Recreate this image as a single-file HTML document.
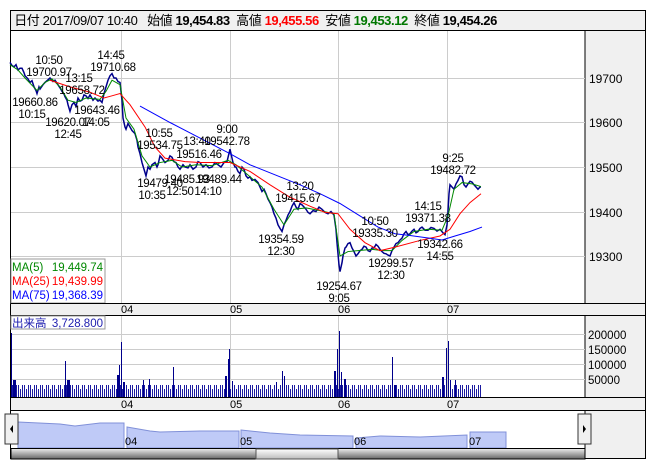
<!DOCTYPE html>
<html><head><meta charset="utf-8"><style>
body{margin:0;width:652px;height:469px;background:#fff;font-family:"Liberation Sans","Noto Sans CJK JP",sans-serif;position:relative;overflow:hidden}
.a{position:absolute}
</style></head><body>
<div class="a" style="left:10px;top:10px;width:636px;height:449px;border:1px solid #000;box-sizing:border-box;background:#f0f0f0"></div>
<div class="a" style="left:11px;top:11px;width:634px;height:19px;background:#f0f0f0;border-bottom:1px solid #000;font-size:13px;line-height:19px;white-space:nowrap;letter-spacing:-0.4px">
&nbsp;日付 2017/09/07 10:40 &nbsp;&nbsp;始値 <b>19,454.83</b> &nbsp;高値 <b style="color:#f00">19,455.56</b> &nbsp;安値 <b style="color:#070">19,453.12</b> &nbsp;終値 <b>19,454.26</b></div>

<svg class="a" style="left:0;top:0" width="652" height="469" viewBox="0 0 652 469" font-family="Liberation Sans, sans-serif">
<rect x="11" y="31" width="574" height="272" fill="#fff"/>
<line x1="585" y1="31" x2="585" y2="303" stroke="#000"/>
<g stroke="#ccc" stroke-width="1">
<line x1="121.5" y1="31" x2="121.5" y2="303"/><line x1="230.5" y1="31" x2="230.5" y2="303"/><line x1="338.5" y1="31" x2="338.5" y2="303"/><line x1="447.5" y1="31" x2="447.5" y2="303"/>
<line x1="11" y1="78.5" x2="585" y2="78.5"/><line x1="11" y1="122.5" x2="585" y2="122.5"/><line x1="11" y1="167.5" x2="585" y2="167.5"/><line x1="11" y1="212.5" x2="585" y2="212.5"/><line x1="11" y1="256.5" x2="585" y2="256.5"/>
</g>
<g font-size="12" fill="#000"><text x="589" y="83">19700</text><text x="589" y="127">19600</text><text x="589" y="172">19500</text><text x="589" y="217">19400</text><text x="589" y="261">19300</text></g>
<g transform="matrix(1 0 0 -0.445 0 8844.5)" fill="none">
<polyline vector-effect="non-scaling-stroke" stroke="#00008b" stroke-width="1.5" points="10,19735 12,19728 14,19725 16,19730 18,19718 20,19722 22,19722 24,19712 25,19705 28,19698 30,19690 32,19694 34,19680 36,19672 37,19665 39,19680 40,19675 43,19685 45,19690 48,19696 50,19700 53,19692 55,19695 57,19688 60,19678 62,19670 64,19664 65,19658 67,19650 68,19640 70,19625 72,19640 74,19645 76,19636 78,19655 80,19648 82,19650 84,19662 86,19660 88,19654 90,19662 93,19650 95,19655 98,19648 100,19650 102,19645 104,19665 106,19680 108,19695 110,19705 112,19710 114,19700 116,19700 118,19692 120,19690 122,19650 123,19610 125,19590 126,19585 128,19598 130,19590 132,19582 135,19575 137,19560 138,19545 140,19530 142,19510 144,19495 146,19480 148,19500 150,19495 152,19505 155,19510 157,19500 158,19505 160,19525 162,19520 165,19510 168,19515 170,19525 172,19522 174,19512 176,19510 178,19500 180,19495 183,19505 185,19500 188,19498 190,19505 193,19495 196,19500 198,19512 200,19510 203,19500 206,19505 209,19498 212,19500 215,19510 218,19505 221,19500 224,19510 227,19512 230,19540 232,19520 233,19510 235,19500 236,19500 238,19490 240,19485 242,19500 244,19495 246,19480 248,19475 250,19478 252,19470 255,19472 258,19465 260,19455 262,19445 264,19450 266,19440 268,19428 270,19420 272,19410 274,19395 276,19385 278,19370 280,19362 282,19355 284,19370 286,19380 288,19392 290,19400 292,19412 294,19420 296,19410 298,19405 300,19418 302,19415 304,19410 306,19405 308,19398 310,19395 313,19402 316,19400 319,19410 322,19405 325,19398 328,19395 331,19400 334,19392 336,19360 337,19330 339,19280 340,19265 342,19285 343,19300 345,19318 346,19320 348,19328 350,19330 352,19318 354,19310 356,19300 358,19305 360,19312 362,19315 364,19322 366,19320 368,19312 370,19310 372,19318 374,19318 376,19326 378,19322 380,19315 382,19310 384,19306 386,19305 388,19302 390,19300 392,19312 394,19320 396,19328 398,19330 400,19336 402,19340 404,19350 406,19355 408,19348 410,19350 412,19356 414,19360 416,19352 418,19355 420,19362 422,19365 425,19358 428,19358 431,19364 434,19362 437,19356 440,19360 443,19352 445,19348 447,19370 448,19400 449,19440 450,19460 452,19455 454,19450 456,19462 458,19470 460,19480 462,19478 464,19460 466,19455 468,19462 470,19468 472,19466 474,19460 476,19455 478,19450 480,19455 481,19455"/>
<polyline vector-effect="non-scaling-stroke" stroke="#080" stroke-width="1" points="10,19730 18,19718 25,19700 37,19672 45,19690 52,19698 60,19680 68,19650 76,19645 86,19655 100,19652 106,19670 112,19695 120,19685 126,19610 134,19585 142,19525 150,19500 160,19510 172,19515 182,19500 196,19505 212,19503 228,19515 236,19505 248,19482 262,19455 274,19405 284,19370 294,19405 306,19408 320,19402 334,19395 340,19300 348,19310 358,19312 372,19315 384,19312 392,19312 402,19335 414,19355 428,19360 442,19358 448,19390 454,19450 462,19465 472,19462 481,19456"/>
<polyline vector-effect="non-scaling-stroke" stroke="#f00" stroke-width="1" points="50,19695 70,19680 90,19668 104,19655 112,19660 120,19665 130,19640 145,19590 155,19545 165,19520 185,19512 200,19510 230,19510 250,19490 270,19460 290,19432 310,19412 325,19398 338,19395 350,19360 365,19330 380,19312 395,19320 420,19335 440,19345 450,19360 460,19395 470,19420 481,19440"/>
<polyline vector-effect="non-scaling-stroke" stroke="#00f" stroke-width="1" points="140,19637 170,19600 200,19565 230,19530 250,19505 280,19478 300,19460 320,19440 340,19418 360,19390 378,19365 395,19350 410,19346 430,19340 442,19336 455,19345 470,19355 482,19365"/>
</g>
<g font-size="11.5" fill="#000" text-anchor="middle" letter-spacing="-0.3">
<text x="49" y="64">10:50</text><text x="49" y="76">19700.97</text>
<text x="111" y="59">14:45</text><text x="113" y="71">19710.68</text>
<text x="79" y="82">13:15</text><text x="82" y="94">19658.72</text>
<text x="35" y="106">19660.86</text><text x="32" y="118">10:15</text>
<text x="97" y="114">19643.46</text><text x="68" y="126">19620.07</text><text x="96" y="126">14:05</text><text x="68" y="138">12:45</text>
<text x="159" y="137">10:55</text><text x="160" y="149">19534.75</text>
<text x="227" y="133">9:00</text><text x="227" y="145">19542.78</text><text x="197" y="145">13:40</text>
<text x="199" y="158">19516.46</text>
<text x="160" y="187">19479.40</text><text x="152" y="199">10:35</text>
<text x="187" y="183">19485.93</text><text x="180" y="195">12:50</text>
<text x="219" y="183">19489.44</text><text x="208" y="195">14:10</text>
<text x="300" y="190">13:20</text><text x="298" y="202">19415.67</text>
<text x="281" y="243">19354.59</text><text x="281" y="255">12:30</text>
<text x="375" y="225">10:50</text><text x="375" y="237">19335.30</text>
<text x="428" y="210">14:15</text><text x="428" y="222">19371.38</text>
<text x="453" y="162">9:25</text><text x="453" y="174">19482.72</text>
<text x="440" y="248">19342.66</text><text x="440" y="260">14:55</text>
<text x="391" y="267">19299.57</text><text x="391" y="279">12:30</text>
<text x="339" y="290">19254.67</text><text x="339" y="302">9:05</text>
</g>
<rect x="11" y="259" width="94" height="44" fill="#fff" stroke="#999"/>
<g font-size="11.5"><text x="12" y="271" fill="#080">MA(5)</text><text x="103" y="271" fill="#080" text-anchor="end">19,449.74</text>
<text x="12" y="285" fill="#f00">MA(25)</text><text x="103" y="285" fill="#f00" text-anchor="end">19,439.99</text>
<text x="12" y="299" fill="#00f">MA(75)</text><text x="103" y="299" fill="#00f" text-anchor="end">19,368.39</text></g>
<rect x="11" y="303" width="634" height="12" fill="#f0f0f0"/>
<line x1="11" y1="303.5" x2="645" y2="303.5" stroke="#000"/><line x1="11" y1="315.5" x2="645" y2="315.5" stroke="#000"/>
<g font-size="11"><text x="121" y="313">04</text><text x="230" y="313">05</text><text x="338" y="313">06</text><text x="447" y="313">07</text></g>
<rect x="11" y="316" width="574" height="81" fill="#fff"/>
<line x1="585" y1="316" x2="585" y2="397" stroke="#000"/>
<g stroke="#ccc"><line x1="121.5" y1="316" x2="121.5" y2="397"/><line x1="230.5" y1="316" x2="230.5" y2="397"/><line x1="338.5" y1="316" x2="338.5" y2="397"/><line x1="447.5" y1="316" x2="447.5" y2="397"/>
<line x1="11" y1="334.5" x2="585" y2="334.5"/><line x1="11" y1="349.5" x2="585" y2="349.5"/><line x1="11" y1="364.5" x2="585" y2="364.5"/><line x1="11" y1="379.5" x2="585" y2="379.5"/></g>
<g font-size="11.5"><text x="588" y="339">200000</text><text x="588" y="354">150000</text><text x="588" y="369">100000</text><text x="588" y="384">50000</text></g>
<defs><pattern id="vb" width="2" height="10" patternUnits="userSpaceOnUse"><rect width="1" height="10" fill="#1a1aa0"/></pattern>
<pattern id="vb2" width="6" height="10" patternUnits="userSpaceOnUse"><rect width="1" height="10" fill="#1a1aa0"/><rect x="4" y="3" width="1" height="7" fill="#1a1aa0"/></pattern></defs>
<rect x="11" y="389" width="471" height="8" fill="url(#vb)"/>
<rect x="11" y="385" width="471" height="4" fill="url(#vb2)"/>
<g fill="#00008b">
<rect x="11" y="333" width="1" height="64"/><rect x="13" y="380" width="3" height="17"/><rect x="65" y="361" width="1" height="36"/><rect x="67" y="380" width="3" height="17"/>
<rect x="117" y="375" width="2" height="22"/><rect x="119" y="365" width="1" height="32"/><rect x="121" y="342" width="1" height="55"/><rect x="123" y="382" width="2" height="15"/>
<rect x="173" y="367" width="1" height="30"/><rect x="143" y="380" width="1" height="17"/><rect x="149" y="379" width="1" height="18"/>
<rect x="225" y="376" width="2" height="21"/><rect x="228" y="359" width="1" height="38"/><rect x="229" y="349" width="1" height="48"/><rect x="232" y="381" width="1" height="16"/>
<rect x="282" y="371" width="1" height="26"/><rect x="284" y="376" width="1" height="21"/><rect x="276" y="382" width="1" height="15"/>
<rect x="334" y="371" width="2" height="26"/><rect x="337" y="349" width="1" height="48"/><rect x="339" y="331" width="1" height="66"/><rect x="341" y="372" width="1" height="25"/><rect x="344" y="379" width="2" height="18"/>
<rect x="392" y="357" width="1" height="40"/><rect x="394" y="385" width="2" height="12"/>
<rect x="442" y="377" width="2" height="20"/><rect x="446" y="348" width="1" height="49"/><rect x="448" y="341" width="1" height="56"/><rect x="450" y="380" width="1" height="17"/><rect x="455" y="380" width="1" height="17"/>
</g>
<rect x="11" y="316" width="94" height="13" fill="#fff" stroke="#999"/>
<g font-size="11.5" fill="#2020b0"><text x="12" y="327">出来高</text><text x="103" y="327" text-anchor="end">3,728.800</text></g>
<rect x="11" y="397" width="634" height="13" fill="#f0f0f0"/>
<line x1="11" y1="397.5" x2="645" y2="397.5" stroke="#000"/><line x1="11" y1="410.5" x2="645" y2="410.5" stroke="#000"/>
<g font-size="11"><text x="121" y="408">04</text><text x="230" y="408">05</text><text x="338" y="408">06</text><text x="447" y="408">07</text></g>
<rect x="11" y="411" width="574" height="37" fill="#fff"/>
<line x1="585" y1="411" x2="585" y2="459" stroke="#000"/>
<path d="M18,422 L60,424 L75,426 L100,423 L124,423 L124,448 L18,448Z M127,427 L150,431 L160,432 L200,431 L239,431 L239,448 L127,448Z M241,430 L270,433 L300,435 L353,436 L353,448 L241,448Z M356,438 L380,436 L420,437 L467,435 L467,448 L356,448Z M470,432 L482,432 L506,432 L506,448 L470,448Z" fill="#bfcaf7" stroke="#8090d8" stroke-width="1"/>
<g font-size="11"><text x="125" y="445">04</text><text x="240" y="445">05</text><text x="354" y="445">06</text><text x="469" y="445">07</text></g>
<rect x="5" y="414" width="13" height="30" fill="#f0f0f0" stroke="#333"/><path d="M10,429 L13,425 L13,433Z" fill="#000"/>
<rect x="578" y="414" width="13" height="30" fill="#f0f0f0" stroke="#333"/><path d="M586,429 L583,425 L583,433Z" fill="#000"/>
<defs><linearGradient id="sg" x1="0" y1="0" x2="0" y2="1"><stop offset="0" stop-color="#eee"/><stop offset="1" stop-color="#666"/></linearGradient>
<linearGradient id="tg" x1="0" y1="0" x2="0" y2="1"><stop offset="0" stop-color="#fff"/><stop offset="1" stop-color="#bbb"/></linearGradient></defs>
<rect x="11" y="448.5" width="574" height="10.5" fill="url(#sg)" stroke="#000"/>
<rect x="256" y="449" width="82" height="10" fill="url(#tg)" stroke="#555"/>
</svg>
</body></html>
